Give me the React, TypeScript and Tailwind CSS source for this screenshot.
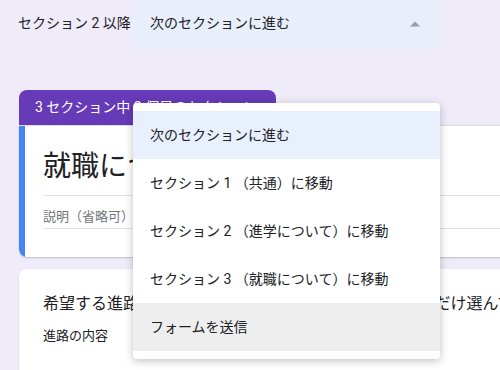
import React from "react";

const menuItems = [
  "次のセクションに進む",
  "セクション 1 （共通）に移動",
  "セクション 2 （進学について）に移動",
  "セクション 3 （就職について）に移動",
  "フォームを送信",
];

export default function App() {
  return (
    <div
      className="relative w-[500px] h-[370px] overflow-hidden bg-[#f0ebf8] text-[#202124]"
      style={{ fontFamily: 'Roboto, "Noto Sans CJK JP", sans-serif' }}
    >
      {/* 移動先の設定 */}
      <div className="flex items-center h-[47px]">
        <span className="w-[133px] pl-[18px] text-[14px] whitespace-nowrap">セクション 2 以降</span>
        <div className="w-[307px] h-full bg-[#e8eefa] flex items-center justify-between pl-[17px] pr-[20px]">
          <span className="text-[14px]">次のセクションに進む</span>
          <svg width="10" height="6" viewBox="0 0 10 6">
            <path d="M0 5.5 L5 0.5 L10 5.5 Z" fill="#9aa0a6" />
          </svg>
        </div>
      </div>

      {/* セクション 3 */}
      <div className="pl-[19px] mt-[43px] w-[660px]">
        <div className="w-[257px] h-[35px] bg-[#673ab7] rounded-t-lg flex items-center pl-[16px] text-white text-[14px]">
          3 セクション中 2 個目のセクション
        </div>
        <div className="flex bg-white rounded-b-lg rounded-tr-lg border-t border-[#dadce0] shadow-[0_1px_2px_rgba(0,0,0,0.2)] overflow-hidden">
          <div className="w-[6px] bg-[#4285f4] shrink-0" />
          <div className="flex-1 pl-[18px] pt-[23px] pb-[28px]">
            <div className="text-[28px] leading-[36px] pb-[10px] border-b border-[#e0e0e0]">就職について</div>
            <div className="mt-[11px] text-[13px] leading-[20px] text-[#70757a] pb-[1px] border-b border-[#e0e0e0]">
              説明（省略可）
            </div>
          </div>
        </div>

        <div className="mt-[12px] bg-white rounded-lg shadow-[0_1px_2px_rgba(0,0,0,0.15)] pl-[24px] pt-[23px] pb-[30px]">
          <div className="text-[16px] leading-[24px] whitespace-nowrap">
            希望する進路について、当てはまるものを以下から1つだけ選んでください
          </div>
          <div className="mt-[10px] text-[13px] leading-[20px]">進路の内容</div>
        </div>
      </div>

      {/* ドロップダウンメニュー */}
      <div className="absolute left-[133px] top-[103px] w-[307px] bg-white rounded py-[8px] shadow-[0_2px_8px_rgba(0,0,0,0.25)]">
        {menuItems.map((item, i) => (
          <div
            key={item}
            className={`h-[48px] flex items-center pl-[17px] text-[14px] whitespace-nowrap ${
              i === 0 ? "bg-[#e8f0fe]" : i === menuItems.length - 1 ? "bg-[#eeeeee]" : ""
            }`}
          >
            {item}
          </div>
        ))}
      </div>
    </div>
  );
}
